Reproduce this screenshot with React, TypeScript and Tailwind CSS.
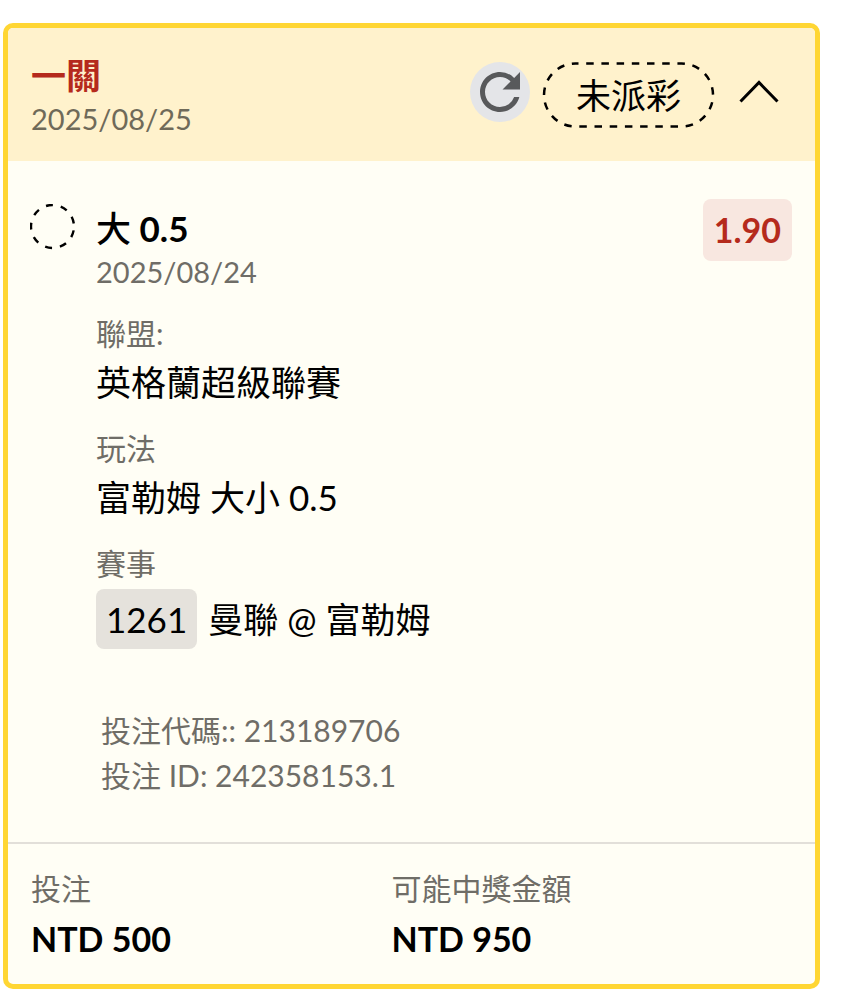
import type { ReactNode } from "react";
import { MdRefresh } from "react-icons/md";

const bet = {
  type: "一關",
  placedAt: "2025/08/25",
  status: "未派彩",
  code: "213189706",
  id: "242358153.1",
};

const leg = {
  side: "大",
  line: "0.5",
  odds: "1.90",
  date: "2025/08/24",
  league: "英格蘭超級聯賽",
  market: "富勒姆 大小 0.5",
  matchNo: "1261",
  match: "曼聯 @ 富勒姆",
};

const totals = [
  { label: "投注", value: "NTD 500" },
  { label: "可能中獎金額", value: "NTD 950" },
];

export default function App() {
  return (
    <main
      lang="zh-Hant"
      className="min-h-screen bg-white pt-[23px] pr-[34px] pb-3 pl-[3px] font-['Lato','Noto_Sans_CJK_TC',sans-serif] text-[35px] leading-[44px] text-black"
    >
      <article className="overflow-hidden rounded-[10px] border-[5px] border-[#ffd633] bg-[#fffef5]">
        <header className="flex items-start justify-between bg-[#fff2cc] px-[23px] pt-[25px] pb-5">
          <div>
            <h1 className="font-bold text-[#b52a1c]">{bet.type}</h1>
            <p className="text-[29px] text-[#6f6a59]">{bet.placedAt}</p>
          </div>
          <div className="flex items-start pt-[9px] pr-[13px]">
            <button type="button" aria-label="重新整理" className="rounded-full bg-[#e4e5e8] text-[#58595b]">
              <MdRefresh className="size-[60px]" />
            </button>
            <StatusPill>{bet.status}</StatusPill>
            <button type="button" aria-label="收合" className="mt-[18px] ml-6">
              <svg viewBox="0 0 40 24" className="h-6 w-10" fill="none" stroke="currentColor" strokeWidth="3">
                <path d="M1.5 21.5 20 2.5l18.5 19" />
              </svg>
            </button>
          </div>
        </header>

        <section className="flex items-start pt-[38px] pr-[23px] pb-11 pl-[22px]">
          <svg viewBox="0 0 46 46" className="mt-[5px] size-[46px] shrink-0" fill="none" stroke="currentColor" strokeWidth="2.4">
            <circle cx="22.5" cy="22.5" r="21.5" strokeDasharray="7 8.01" strokeDashoffset="-4" />
          </svg>
          <div className="ml-5 flex-1">
            <h2 className="pt-[7px] font-bold">
              <span className="font-medium">{leg.side}</span> {leg.line}
            </h2>
            <p className="text-[29px] text-[#6f6d67]">{leg.date}</p>
            <dl className="space-y-[21px] pt-[17px]">
              <Field label="聯盟:">{leg.league}</Field>
              <Field label="玩法">{leg.market}</Field>
              <Field label="賽事">
                <span className="mr-[11px] rounded-lg bg-[#e5e2dc] px-[10px] py-[7px]">{leg.matchNo}</span>
                <span>{leg.match}</span>
              </Field>
            </dl>
            <div className="mt-[59px] pl-[5px] text-[30px] leading-[45px] text-[#6f6d67]">
              <p>投注代碼:: {bet.code}</p>
              <p>投注 ID: {bet.id}</p>
            </div>
          </div>
          <span className="rounded-lg bg-[#f8e7e0] px-[11px] py-[9px] text-[34px] font-bold text-[#b52a1c]">{leg.odds}</span>
        </section>

        <dl className="grid grid-cols-[9fr_10fr] border-t-2 border-[#e2dfd9] px-[23px] pt-[22px] pb-[23px]">
          {totals.map((t) => (
            <div key={t.label}>
              <dt className="text-[30px] text-[#6f6d67]">{t.label}</dt>
              <dd className="pt-[7px] text-[34px] font-bold">{t.value}</dd>
            </div>
          ))}
        </dl>
      </article>
    </main>
  );
}

function StatusPill({ children }: { children: ReactNode }) {
  return (
    <span className="relative ml-3 px-[34px] py-[11px]">
      {/* dashed outline, longer dashes than border-dashed gives */}
      <svg className="absolute inset-0 size-full" viewBox="0 0 173 66" preserveAspectRatio="none" fill="none" stroke="currentColor" strokeWidth="2.5">
        <rect x="2" y="1.5" width="169" height="63" rx="31.5" strokeDasharray="7.5 7.7" strokeDashoffset="4.5" />
      </svg>
      {children}
    </span>
  );
}

function Field({ label, children }: { label: string; children: ReactNode }) {
  return (
    <div>
      <dt className="text-[30px] text-[#6f6d67]">{label}</dt>
      <dd className="flex items-center pt-1 leading-[46px]">{children}</dd>
    </div>
  );
}
